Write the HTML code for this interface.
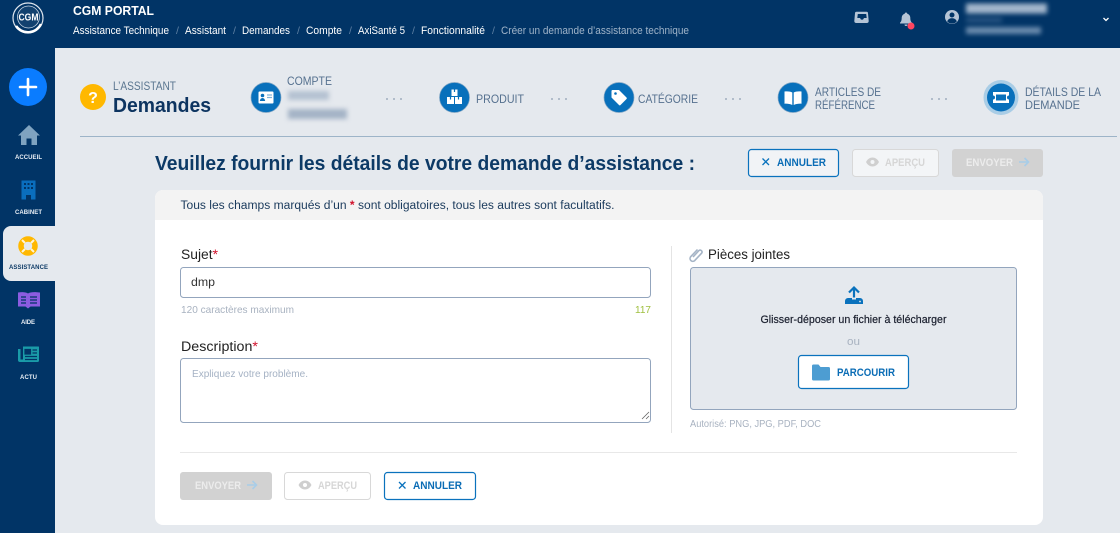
<!DOCTYPE html>
<html lang="fr"><head><meta charset="utf-8"><title>CGM Portal</title>
<style>
html,body{margin:0;padding:0;width:1120px;height:533px;overflow:hidden;background:#e5e9ee}
svg{display:block;position:absolute;left:0;top:0}
text{font-family:"Liberation Sans",sans-serif;white-space:pre}
.bc{font-size:11px;fill:#fff}
.side{font-size:6px;font-weight:700;fill:#e8eef5}
.step{font-size:12px;fill:#56718f}
.sep{font-size:10.5px;fill:#5f80a3}
.btn{font-size:11px;font-weight:700}
.lab{font-size:13.5px;fill:#222}
.mut{font-size:10.5px;fill:#a8b2c0}
.blur{filter:blur(2.5px)}
</style></head><body>
<svg width="1120" height="533" viewBox="0 0 1120 533" xmlns="http://www.w3.org/2000/svg">
<rect width="1120" height="533" fill="#e5e9ee"/>
<rect width="1120" height="48" fill="#013466"/>
<rect width="55" height="533" fill="#013466"/>
<!-- logo -->
<circle cx="28" cy="18" r="15" fill="#013466" stroke="#dfe6ee" stroke-width="1.2"/>
<path d="M16 26a14.500 14.500 0 0 0 25-2" fill="none" stroke="#fff" stroke-width="2.500"/>
<circle cx="28.500" cy="17" r="11" fill="#12416f" stroke="#c5d2e0" stroke-width=".8"/>
<text x="18.500" y="20.500" font-size="10" font-weight="700" fill="#fff" textLength="20" lengthAdjust="spacingAndGlyphs">CGM</text>
<text x="73" y="15" font-size="13" font-weight="700" fill="#fff" textLength="81" lengthAdjust="spacingAndGlyphs">CGM PORTAL</text>
<!-- breadcrumb -->
<text class="bc" x="73" y="34" textLength="96" lengthAdjust="spacingAndGlyphs">Assistance Technique</text><text class="sep" x="176" y="34">/</text>
<text class="bc" x="185" y="34" textLength="41" lengthAdjust="spacingAndGlyphs">Assistant</text><text class="sep" x="233" y="34">/</text>
<text class="bc" x="242" y="34" textLength="48" lengthAdjust="spacingAndGlyphs">Demandes</text><text class="sep" x="297" y="34">/</text>
<text class="bc" x="306" y="34" textLength="36" lengthAdjust="spacingAndGlyphs">Compte</text><text class="sep" x="349" y="34">/</text>
<text class="bc" x="358" y="34" textLength="47" lengthAdjust="spacingAndGlyphs">AxiSanté 5</text><text class="sep" x="412" y="34">/</text>
<text class="bc" x="421" y="34" textLength="64" lengthAdjust="spacingAndGlyphs">Fonctionnalité</text><text class="sep" x="492" y="34">/</text>
<text class="bc" x="501" y="34" textLength="188" lengthAdjust="spacingAndGlyphs" style="fill:#9fb3c8">Créer un demande d’assistance technique</text>
<!-- header icons -->
<path d="M857 11.700h9.500a1.500 1.500 0 0 1 1.500 1.500l.7 7.800a2 2 0 0 1-2 2h-10.400a2 2 0 0 1-2-2l.7-7.800a1.500 1.500 0 0 1 1.500-1.500zM857.800 14l-.5 4h2.700l1 1.600h2l1-1.600h2.700l-.5-4z" fill="#b5c4d6" fill-rule="evenodd"/>
<path d="M906 12.500c.8 0 1.200.5 1.300 1.200 2 .6 3 2.200 3 4.300 0 2.800.8 3.800 1.700 4.800v.7h-12v-.7c.9-1 1.700-2 1.700-4.800 0-2.100 1-3.700 3-4.300.1-.7.500-1.200 1.300-1.200zM904.500 24.500h3a1.500 1.500 0 0 1-3 0z" fill="#b5c4d6"/>
<circle cx="911" cy="26" r="3.500" fill="#ff4560"/>
<circle cx="952" cy="17" r="7" fill="#b5c4d6"/>
<circle cx="952" cy="15" r="2.500" fill="#013466"/>
<path d="M947.200 21.500c.8-2.300 2.600-3.200 4.800-3.200s4 .9 4.800 3.200a6.500 6.500 0 0 1-9.600 0z" fill="#013466"/>
<g class="blur"><rect x="966" y="3.500" width="81" height="10" fill="#a3b6cc"/><rect x="966" y="18" width="36" height="4" fill="#2f5a86"/><rect x="966" y="27" width="75" height="7" fill="#6b8cae"/></g>
<path d="M1103.500 18l2.500 2.500 2.500-2.500" fill="none" stroke="#fff" stroke-width="1.300"/>
<!-- sidebar -->
<circle cx="28" cy="87" r="19" fill="#0a7cff"/>
<path d="M28 79v16M20 87h16" stroke="#fff" stroke-width="2.600" stroke-linecap="round"/>
<path d="M29 125l11 10.500h-3V145h-5.500v-6.500h-5V145H21v-9.500h-3z" fill="#7fa3c0"/>
<text class="side" x="15" y="159" textLength="27">ACCUEIL</text>
<path d="M21.500 180.500h14v19h-4.500v-4.500h-5v4.500h-4.500z" fill="#0a6ebd"/>
<g fill="#013466"><rect x="24" y="183" width="2" height="2"/><rect x="27.500" y="183" width="2" height="2"/><rect x="31" y="183" width="2" height="2"/><rect x="24" y="187" width="2" height="2"/><rect x="27.500" y="187" width="2" height="2"/><rect x="31" y="187" width="2" height="2"/></g>
<text class="side" x="15" y="214" textLength="27">CABINET</text>
<path d="M55 226H11a8 8 0 0 0-8 8v39a8 8 0 0 0 8 8h44z" fill="#e5e9ee"/>
<circle cx="28" cy="246" r="7" fill="none" stroke="#ffb800" stroke-width="5.500"/>
<path d="M22 240l3 3M34 240l-3 3M22 252l3-3M34 252l-3-3" stroke="#fff5d6" stroke-width="2"/>
<text class="side" x="9" y="269" textLength="39" style="fill:#0d3a66">ASSISTANCE</text>
<path d="M18 292.500c4-.8 8-.5 10 1 2-1.500 6-1.800 12-1v14h-9.500l-2.500 2-2.500-2H18z" fill="#8c5ce0"/>
<path d="M21 297h5M21 300h5M21 303h5M30 297h7M30 300h7M30 303h7" stroke="#013466" stroke-width="1.200"/>
<text class="side" x="21" y="324" textLength="14">AIDE</text>
<path d="M23 346.500h15.500a.5.500 0 0 1 .5.500v13.500a1.500 1.500 0 0 1-1.500 1.500H20a2 2 0 0 1-2-2v-11h2.500v10.500h2.500z" fill="#1a9ba8"/>
<path d="M25 349.500h5.500v4.500H25zM32.500 350h4.500M32.500 353h4.500M25 356.500h12M25 359.500h12" stroke="#013466" stroke-width="1.200" fill="#013466"/>
<text class="side" x="20" y="379" textLength="17">ACTU</text>
<!-- assistant -->
<circle cx="93" cy="97" r="13" fill="#ffb800"/>
<text x="93" y="103" font-size="16" font-weight="700" fill="#fff" text-anchor="middle">?</text>
<text x="113" y="90" font-size="12" fill="#5a7690" textLength="63" lengthAdjust="spacingAndGlyphs">L’ASSISTANT</text>
<text x="113" y="112" font-size="20" font-weight="700" fill="#0d3460" textLength="98" lengthAdjust="spacingAndGlyphs">Demandes</text>
<!-- steps -->
<circle cx="266" cy="97.500" r="15" fill="#0870bb" stroke="#7fa5c4" stroke-width=".7"/>
<rect x="258.500" y="91.500" width="15" height="12" rx="1" fill="#fff"/>
<circle cx="262.500" cy="95.500" r="1.800" fill="#0870bb"/><path d="M259.800 101c.3-2 1.300-3 2.700-3s2.400 1 2.700 3z" fill="#0870bb"/>
<path d="M267 95h5M267 97.500h5" stroke="#7fb3d9" stroke-width="1.200"/>
<text class="step" x="287" y="85" textLength="45" lengthAdjust="spacingAndGlyphs">COMPTE</text>
<g class="blur"><rect x="288" y="91" width="41" height="9" fill="#b4c1d1"/><rect x="288" y="109" width="59" height="10" fill="#a4b3c6"/></g>
<circle cx="454.500" cy="97.500" r="15" fill="#0870bb" stroke="#7fa5c4" stroke-width=".7"/>
<path d="M451.500 89.500h6v6.500h-6zM447 97h7v7h-7zM455 97h7v7h-7z" fill="#fff"/>
<path d="M454.500 89.500v2.500M450.500 97v2.500M458.500 97v2.500" stroke="#0870bb" stroke-width="1.200"/>
<text class="step" x="476" y="103" textLength="48" lengthAdjust="spacingAndGlyphs">PRODUIT</text>
<circle cx="619" cy="97.500" r="15" fill="#0870bb" stroke="#7fa5c4" stroke-width=".7"/>
<path d="M612.500 90h6.500l7.500 7.500a1 1 0 0 1 0 1.500l-6 6a1 1 0 0 1-1.500 0l-7.500-7.500v-6.500a1 1 0 0 1 1-1z" fill="#fff"/>
<circle cx="615.500" cy="93.500" r="1.300" fill="#0870bb"/>
<text class="step" x="638" y="103" textLength="60" lengthAdjust="spacingAndGlyphs">CATÉGORIE</text>
<circle cx="793" cy="97.500" r="15" fill="#0870bb" stroke="#7fa5c4" stroke-width=".7"/>
<path d="M792.300 92.500v12.500c-2-1-5-1.500-7.800-1.300V91.500c3.500-.3 6 0 7.800 1zM793.700 92.500v12.500c2-1 5-1.500 7.800-1.300V91.500c-3.500-.3-6 0-7.800 1z" fill="#fff"/>
<text class="step" x="815" y="96" textLength="66" lengthAdjust="spacingAndGlyphs">ARTICLES DE</text>
<text class="step" x="815" y="109" textLength="60" lengthAdjust="spacingAndGlyphs">RÉFÉRENCE</text>
<circle cx="1001" cy="97.500" r="17.500" fill="#a9cde6"/>
<circle cx="1001" cy="97.500" r="14" fill="#0870bb"/>
<path d="M993 92h16v3.500a2 2 0 0 0 0 4V103h-16v-3.500a2 2 0 0 0 0-4z" fill="#fff"/>
<rect x="996" y="94.500" width="10" height="6" fill="#0870bb"/>
<text class="step" x="1025" y="96" textLength="76" lengthAdjust="spacingAndGlyphs">DÉTAILS DE LA</text>
<text class="step" x="1025" y="109" textLength="55" lengthAdjust="spacingAndGlyphs">DEMANDE</text>
<g fill="#8c9db0"><circle cx="387" cy="99" r=".9"/><circle cx="394" cy="99" r=".9"/><circle cx="401" cy="99" r=".9"/><circle cx="552" cy="99" r=".9"/><circle cx="559" cy="99" r=".9"/><circle cx="566" cy="99" r=".9"/><circle cx="726" cy="99" r=".9"/><circle cx="733" cy="99" r=".9"/><circle cx="740" cy="99" r=".9"/><circle cx="932" cy="99" r=".9"/><circle cx="939" cy="99" r=".9"/><circle cx="946" cy="99" r=".9"/></g>
<rect x="80" y="136" width="1037" height="1" fill="#9db4c8"/>
<!-- title -->
<text x="155" y="170" font-size="20" font-weight="700" fill="#0d3a66" textLength="540" lengthAdjust="spacingAndGlyphs">Veuillez fournir les détails de votre demande d’assistance :</text>
<!-- top buttons -->
<rect x="748.500" y="149.500" width="90" height="27" rx="3" fill="#f1f3f6" stroke="#0a72bd" stroke-width="1.200"/>
<path d="M762.500 158.500l6.500 6.500M769 158.500l-6.500 6.500" stroke="#0a72bd" stroke-width="1.300"/>
<text class="btn" x="777" y="166" textLength="49" lengthAdjust="spacingAndGlyphs" fill="#0a6cb5">ANNULER</text>
<rect x="852.500" y="149.500" width="86" height="27" rx="3" fill="#f3f5f7" stroke="#d8d8d8"/>
<path d="M866 162c1.500-3 4-4.500 6.500-4.500s5 1.500 6.500 4.500c-1.500 3-4 4.500-6.500 4.500s-5-1.500-6.500-4.500z" fill="#cfcfcf"/><circle cx="872.500" cy="162" r="2" fill="#f3f5f7"/>
<text class="btn" x="885" y="166" textLength="40" lengthAdjust="spacingAndGlyphs" fill="#d6d6d6">APERÇU</text>
<rect x="952" y="149" width="91" height="28" rx="3" fill="#d2d2d2"/>
<text class="btn" x="966" y="166" textLength="47" lengthAdjust="spacingAndGlyphs" fill="#ececec">ENVOYER</text>
<path d="M1019 162h9M1024.500 158l4 4-4 4" fill="none" stroke="#a8cde8" stroke-width="1.600"/>
<!-- card -->
<path d="M163 190h872a8 8 0 0 1 8 8v319a8 8 0 0 1-8 8H163a8 8 0 0 1-8-8V198a8 8 0 0 1 8-8z" fill="#fff"/>
<path d="M163 190h872a8 8 0 0 1 8 8v22H155v-22a8 8 0 0 1 8-8z" fill="#f3f3f3"/>
<text x="180.500" y="209" font-size="11.500" fill="#1a3a5c" textLength="434" lengthAdjust="spacingAndGlyphs">Tous les champs marqués d’un <tspan fill="#d0112b" font-weight="700">*</tspan> sont obligatoires, tous les autres sont facultatifs.</text>
<!-- left form -->
<text class="lab" x="181" y="259" textLength="37" lengthAdjust="spacingAndGlyphs">Sujet<tspan fill="#d0112b">*</tspan></text>
<rect x="180.500" y="267.500" width="470" height="30" rx="3" fill="#fff" stroke="#93a5bd"/>
<text x="191" y="286" font-size="12" fill="#333" textLength="24" lengthAdjust="spacingAndGlyphs">dmp</text>
<text class="mut" x="181" y="313" textLength="113" lengthAdjust="spacingAndGlyphs">120 caractères maximum</text>
<text x="635" y="313" font-size="10.500" fill="#a0c040" textLength="16" lengthAdjust="spacingAndGlyphs">117</text>
<text class="lab" x="181" y="351" textLength="77" lengthAdjust="spacingAndGlyphs">Description<tspan fill="#d0112b">*</tspan></text>
<rect x="180.500" y="358.500" width="470" height="64" rx="3" fill="#fff" stroke="#93a5bd"/>
<text x="192" y="377" font-size="10" fill="#a5b2c4" textLength="116" lengthAdjust="spacingAndGlyphs">Expliquez votre problème.</text>
<path d="M642 419l7-7M646 419l3-3" stroke="#666" stroke-width=".8"/>
<rect x="671" y="246" width="1" height="187" fill="#e4e4e4"/>
<!-- right -->
<path d="M692.500 257l6-6.500a1.900 1.900 0 0 1 2.700 2.600l-7 7.500a2.800 2.800 0 0 1-4-3.900l6.800-7.200" fill="none" stroke="#a5b4c6" stroke-width="1.600" transform="translate(.5,0)"/>
<text class="lab" x="708" y="259" textLength="82" lengthAdjust="spacingAndGlyphs">Pièces jointes</text>
<rect x="690.500" y="267.500" width="326" height="142" rx="3" fill="#e5e9ee" stroke="#93a5bd"/>
<path d="M854 297.500v-10M849 292.500l5-5 5 5" fill="none" stroke="#0a72bd" stroke-width="2.200"/>
<path d="M845 304v-3a3 3 0 0 1 3-3h4v1.500h4V298h4a3 3 0 0 1 3 3v3z" fill="#0a72bd"/>
<circle cx="860" cy="301.500" r=".9" fill="#e5e9ee"/>
<text x="760.500" y="323" font-size="11" fill="#1a1f2e" stroke="#1a1f2e" stroke-width=".2" textLength="186" lengthAdjust="spacingAndGlyphs">Glisser-déposer un fichier à télécharger</text>
<text x="847" y="345" font-size="11" fill="#a8b2c0" textLength="13" lengthAdjust="spacingAndGlyphs">ou</text>
<rect x="798.500" y="355.500" width="110" height="33" rx="3" fill="#fff" stroke="#0a72bd" stroke-width="1.200"/>
<path d="M812 366a1.500 1.500 0 0 1 1.500-1.500h5l2 2.500h8a1.500 1.500 0 0 1 1.500 1.500v10.500a1.500 1.500 0 0 1-1.500 1.500h-15a1.500 1.500 0 0 1-1.500-1.500z" fill="#4d9dd2"/>
<text class="btn" x="837" y="376" textLength="58" lengthAdjust="spacingAndGlyphs" fill="#0a6cb5">PARCOURIR</text>
<text class="mut" x="690" y="427" textLength="131" lengthAdjust="spacingAndGlyphs">Autorisé: PNG, JPG, PDF, DOC</text>
<rect x="180" y="452" width="837" height="1" fill="#e8e8e8"/>
<!-- bottom buttons -->
<rect x="180" y="472" width="92" height="28" rx="3" fill="#d2d2d2"/>
<text class="btn" x="195" y="489" textLength="46" lengthAdjust="spacingAndGlyphs" fill="#ececec">ENVOYER</text>
<path d="M247 485h10M252.500 481l4 4-4 4" fill="none" stroke="#a8cde8" stroke-width="1.600"/>
<rect x="284.500" y="472.500" width="86" height="27" rx="3" fill="#fff" stroke="#d8d8d8"/>
<path d="M298.500 485c1.500-3 4-4.500 6.500-4.500s5 1.500 6.500 4.500c-1.500 3-4 4.500-6.500 4.500s-5-1.500-6.500-4.500z" fill="#cfcfcf"/><circle cx="305" cy="485" r="2" fill="#fff"/>
<text class="btn" x="318" y="489" textLength="39" lengthAdjust="spacingAndGlyphs" fill="#d6d6d6">APERÇU</text>
<rect x="384.500" y="472.500" width="91" height="27" rx="3" fill="#fff" stroke="#0a72bd" stroke-width="1.200"/>
<path d="M399 482l6.500 6.500M405.500 482l-6.500 6.500" stroke="#0a72bd" stroke-width="1.300"/>
<text class="btn" x="413" y="489" textLength="49" lengthAdjust="spacingAndGlyphs" fill="#0a6cb5">ANNULER</text>
</svg>
</body></html>
